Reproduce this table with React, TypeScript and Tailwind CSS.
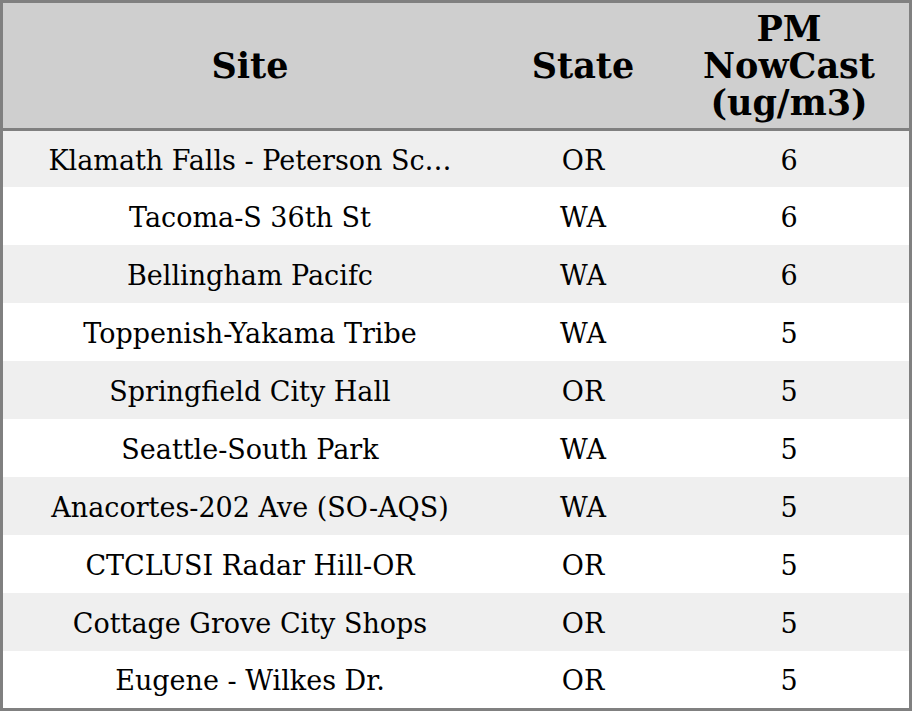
import React from "react";

const rows: [string, string, string][] = [
  ["Klamath Falls - Peterson Sc\u2026", "OR", "6"],
  ["Tacoma-S 36th St", "WA", "6"],
  ["Bellingham Pacifc", "WA", "6"],
  ["Toppenish-Yakama Tribe", "WA", "5"],
  ["Springfield City Hall", "OR", "5"],
  ["Seattle-South Park", "WA", "5"],
  ["Anacortes-202 Ave (SO-AQS)", "WA", "5"],
  ["CTCLUSI Radar Hill-OR", "OR", "5"],
  ["Cottage Grove City Shops", "OR", "5"],
  ["Eugene - Wilkes Dr.", "OR", "5"],
];

const heights = ["h-[56px]", "h-[58px]", "h-[58px]", "h-[58px]", "h-[58px]", "h-[58px]", "h-[58px]", "h-[58px]", "h-[58px]", "h-[57px]"];

export default function App() {
  return (
    <div
      className="w-[912px] h-[711px] border-[3px] border-[#808080] bg-white flex flex-col overflow-hidden text-black"
      style={{ fontFamily: '"DejaVu Serif", serif' }}
    >
      <div className="h-[128px] shrink-0 bg-[#cfcfcf] border-b-[3px] border-[#808080] flex items-center font-bold text-[35px] leading-[37px]">
        <div className="w-[494px] text-center">Site</div>
        <div className="w-[172px] text-center">State</div>
        <div className="flex-1 text-center">
          PM
          <br />
          NowCast
          <br />
          (ug/m3)
        </div>
      </div>
      {rows.map((r, i) => (
        <div
          key={i}
          className={`${heights[i]} shrink-0 flex items-center pt-[4px] text-[27px] ${i % 2 === 0 ? "bg-[#efefef]" : "bg-white"}`}
        >
          <div className="w-[494px] text-center whitespace-nowrap">{r[0]}</div>
          <div className="w-[172px] text-center">{r[1]}</div>
          <div className="flex-1 text-center">{r[2]}</div>
        </div>
      ))}
    </div>
  );
}
